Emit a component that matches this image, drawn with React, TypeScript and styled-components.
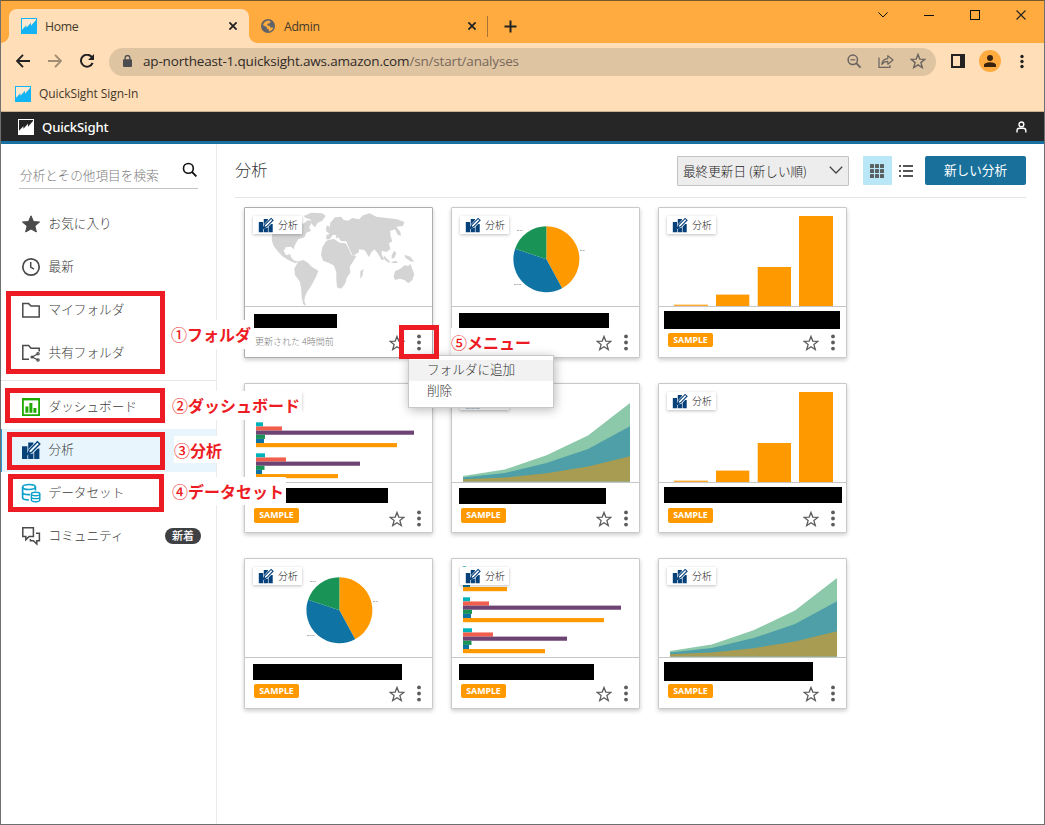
import React from "react";
import styled, { createGlobalStyle } from "styled-components";

const GlobalStyle = createGlobalStyle`
  * { box-sizing: border-box; }
  html, body { margin: 0; padding: 0; }
  body {
    width: 1045px;
    height: 825px;
    overflow: hidden;
    font-family: "Noto Sans", "Noto Sans CJK JP", sans-serif;
    color: #444;
  }
  svg { display: block; flex: none; }
`;

const JP = `"Noto Sans CJK JP", sans-serif`;
const UI = `"Open Sans", "Noto Sans", sans-serif`;

/* ---------- window ---------- */

const Window = styled.div`
  position: relative;
  display: flex;
  flex-direction: column;
  width: 1045px;
  height: 825px;
  border: 1px solid #707070;
  border-top-color: #76582f;
  background: #fff;
`;

const TabStrip = styled.div`
  display: flex;
  align-items: flex-start;
  height: 42px;
  padding-left: 8px;
  background: #ffab40;
`;

const Tab = styled.div<{ $active?: boolean; $width: number }>`
  position: relative;
  display: flex;
  align-items: center;
  width: ${(p) => p.$width}px;
  height: 34px;
  margin-top: 8px;
  padding: 0 12px 0 12px;
  border-radius: 8px 8px 0 0;
  background: ${(p) => (p.$active ? "#ffdeb8" : "transparent")};
  ${(p) =>
    p.$active &&
    `
    &::before, &::after {
      content: "";
      position: absolute;
      bottom: 0;
      width: 8px;
      height: 8px;
    }
    &::before { left: -8px; background: radial-gradient(circle at 0 0, transparent 7.5px, #ffdeb8 8px); }
    &::after { right: -8px; background: radial-gradient(circle at 100% 0, transparent 7.5px, #ffdeb8 8px); }
  `}
`;

const TabTitle = styled.span<{ $gap: number }>`
  flex: 1;
  margin-left: ${(p) => p.$gap}px;
  padding-top: 2px;
  font: 12.3px/18px ${UI};
  letter-spacing: -0.35px;
  color: #45392b;
`;

const TabDivider = styled.div`
  width: 1px;
  height: 21px;
  margin: 15px 16px 0 -1px;
  background: #a87434;
`;

const NewTab = styled.div`
  margin-top: 19px;
`;

const WindowControls = styled.div`
  display: flex;
  margin-left: auto;
`;

const ControlButton = styled.div`
  display: flex;
  align-items: center;
  justify-content: center;
  width: 46px;
  height: 28px;
`;

const Toolbar = styled.div`
  display: flex;
  align-items: center;
  height: 37px;
  padding: 0 15px 0 15px;
  background: #ffdeb8;
`;

const NavButtons = styled.div`
  display: flex;
  gap: 18px;
  width: 93px;
  margin-bottom: 1px;
`;

const Omnibox = styled.div`
  display: flex;
  align-items: center;
  width: 827px;
  height: 28px;
  padding: 0 10px 1px 14px;
  border-radius: 14px;
  background: #dfc4a2;
`;

const Url = styled.span`
  flex: 1;
  margin-left: 11px;
  font: 13.5px/20px ${UI};
  letter-spacing: -0.17px;
  color: #2f2a26;
  span { color: #75685a; }
`;

const OmniActions = styled.div`
  display: flex;
  align-items: center;
  gap: 16px;
`;

const ToolbarEnd = styled.div`
  display: flex;
  align-items: center;
  margin: 0 0 1px 15px;
`;

const Avatar = styled.div`
  display: flex;
  align-items: center;
  justify-content: center;
  width: 22px;
  height: 22px;
  margin: 0 19px 0 14px;
  border-radius: 50%;
  background: #ffab40;
`;

const BookmarkBar = styled.div`
  display: flex;
  align-items: center;
  height: 32px;
  padding: 0 14px 4px;
  border-bottom: 1px solid #cbb08f;
  background: #ffdeb8;
`;

const BookmarkText = styled.span`
  margin-left: 8px;
  font: 12px/18px ${UI};
  letter-spacing: -0.08px;
  color: #45392b;
`;

/* ---------- app ---------- */

const AppHeader = styled.header`
  display: flex;
  align-items: center;
  height: 32px;
  padding: 0 17px 0 17px;
  border-bottom: 3px solid #1871a0;
  background: #262626;
`;

const Brand = styled.span`
  flex: 1;
  margin-left: 8px;
  font: 500 13.2px/20px "Noto Sans", sans-serif;
  letter-spacing: -0.2px;
  color: #fff;
`;

const AppBody = styled.div`
  display: flex;
  flex: 1;
  min-height: 0;
`;

const Sidebar = styled.aside`
  width: 216px;
  border-right: 1px solid #ebebeb;
`;

const SearchField = styled.div`
  display: flex;
  align-items: flex-end;
  justify-content: space-between;
  width: 179px;
  height: 45px;
  margin: 0 0 13.6px 18px;
  padding: 0 0 3px 1px;
  border-bottom: 1px solid #c4c4c4;
  font: 300 12.65px/20px ${JP};
  color: #7c7c7c;
  svg { margin: 0 1px 8px 0; }
`;

const NavItem = styled.div<{ $active?: boolean }>`
  display: flex;
  align-items: center;
  height: 43px;
  padding: 0 15px 0 20px;
  background: ${(p) => (p.$active ? "#e8f5fc" : "transparent")};
  box-shadow: ${(p) => (p.$active ? "inset 1px 0 #2a9ad0" : "none")};
`;

const NavLabel = styled.span`
  flex: 1;
  margin-left: 7.5px;
  padding-bottom: 2.6px;
  font: 300 12.65px/20px ${JP};
  color: #3c3c3c;
`;

const NewBadge = styled.span`
  width: 36px;
  height: 16px;
  border-radius: 8px;
  background: #3f4043;
  font: 500 11px/15px ${JP};
  text-align: center;
  color: #fff;
`;

const NavDivider = styled.div`
  height: 1px;
  margin: 5px 0 5.4px;
  background: #e6e6e6;
`;

const Main = styled.main`
  flex: 1;
  padding: 12px 18px 0 18px;
`;

const PageHeader = styled.div`
  display: flex;
  align-items: flex-start;
  height: 42px;
  border-bottom: 1px solid #e4e4e4;
`;

const PageTitle = styled.h1`
  flex: 1;
  margin: 1px 0 0;
  font: 300 16.2px/24px ${JP};
  color: #333;
`;

const SortSelect = styled.div`
  display: flex;
  align-items: center;
  justify-content: space-between;
  width: 172px;
  height: 30px;
  margin-right: 14px;
  padding: 0 5px 0 5px;
  border: 1px solid #c2c2c2;
  border-radius: 1px;
  background: #ededed;
  font: 300 12.6px/26px ${JP};
  color: #222;
  svg { margin-bottom: 2px; }
`;

const ViewToggle = styled.div<{ $active?: boolean }>`
  display: flex;
  align-items: center;
  justify-content: center;
  width: 29px;
  height: 29px;
  padding-right: 1px;
  border-radius: 1px;
  background: ${(p) => (p.$active ? "#b9e7f7" : "transparent")};
`;

const PrimaryButton = styled.div`
  width: 101px;
  height: 29px;
  margin-left: 4px;
  border-radius: 2px;
  background: #19719b;
  font: 400 12.6px/28px ${JP};
  text-align: center;
  color: #fff;
`;

const CardGrid = styled.div`
  display: grid;
  grid-template-columns: repeat(3, 189px);
  grid-template-rows: 151px 150px 151px;
  gap: 25px 18px;
  padding: 9px 0 0 9px;
`;

const Card = styled.article<{ $strong?: boolean }>`
  position: relative;
  border: 1px solid ${(p) => (p.$strong ? "#adadad" : "#c9c9c9")};
  border-radius: 1px;
  background: #fff;
  box-shadow: 0 2px 4px rgba(0, 0, 0, 0.2);
`;

const Thumb = styled.div`
  height: 99px;
  border-bottom: 1px solid #c6c6c6;
`;

const TypeTag = styled.div`
  position: absolute;
  top: 8px;
  left: 8px;
  display: flex;
  align-items: center;
  gap: 4px;
  width: 49px;
  height: 18px;
  padding-left: 5px;
  background: #fff;
  box-shadow: 0 1px 3px rgba(0, 0, 0, 0.25);
  font: 300 9.9px/16px ${JP};
  color: #222;
`;

const Redacted = styled.div<{ $x: number; $y: number; $w: number; $h: number }>`
  width: ${(p) => p.$w}px;
  height: ${(p) => p.$h}px;
  margin: ${(p) => p.$y}px 0 ${(p) => 26 - p.$y - p.$h}px ${(p) => p.$x}px;
  background: #000;
`;

const CardFooter = styled.div`
  display: flex;
  align-items: flex-start;
  padding: 0 11px 0 9px;
`;

const SampleBadge = styled.span<{ $h: number }>`
  width: 45px;
  height: ${(p) => p.$h}px;
  margin-top: ${(p) => (p.$h > 14 ? -1 : 0)}px;
  border-radius: 2px;
  background: #ff9900;
  font: 700 8.8px/14px "Noto Sans", sans-serif;
  text-align: center;
  color: #fff;
`;

const Updated = styled.span`
  padding-left: 1px;
  font: 300 9px/17px ${JP};
  color: #7c7c7c;
`;

const CardActions = styled.div`
  display: flex;
  align-items: center;
  gap: 12px;
  margin: 1px 0 0 auto;
`;

/* ---------- overlays ---------- */

const ContextMenu = styled.div`
  position: absolute;
  left: 407px;
  top: 354px;
  width: 146px;
  height: 53px;
  padding-top: 4px;
  border: 1px solid #c8c8c8;
  background: #fff;
  box-shadow: 1px 2px 10px rgba(0, 0, 0, 0.28);
`;

const MenuItem = styled.div<{ $hover?: boolean }>`
  height: 21px;
  padding-left: 18px;
  background: ${(p) => (p.$hover ? "#f2f2f2" : "transparent")};
  font: 300 12.6px/18px ${JP};
  color: #333;
`;

const Outline = styled.div<{ $x: number; $y: number; $w: number; $h: number }>`
  position: absolute;
  left: ${(p) => p.$x - 1}px;
  top: ${(p) => p.$y - 1}px;
  width: ${(p) => p.$w}px;
  height: ${(p) => p.$h}px;
  border: 5px solid #ed1c24;
`;

const Note = styled.div<{ $x: number; $y: number; $w: number; $h: number }>`
  position: absolute;
  left: ${(p) => p.$x - 1}px;
  top: ${(p) => p.$y - 1}px;
  width: ${(p) => p.$w}px;
  height: ${(p) => p.$h}px;
  background: #fff;
  font: 700 16px/29px ${JP};
  white-space: nowrap;
  color: #ed1c24;
  span { font-weight: 500; }
`;

/* ---------- icons ---------- */

const QsLogo = ({ color, bg }: { color: string; bg: string }) => (
  <svg width="16" height="16" viewBox="0 0 16 16">
    <rect width="16" height="16" fill={color} />
    <path d="M1 1H15V2L10 7.8V4.8L5.4 9.8V7.2L1 11.8Z" fill={bg} />
  </svg>
);

const Cross = ({ size = 8, width = 1.8, color = "#222" }) => (
  <svg width={size} height={size} viewBox="0 0 8 8">
    <path d="M.4 .4L7.6 7.6M7.6 .4L.4 7.6" stroke={color} strokeWidth={width} />
  </svg>
);

const Globe = () => (
  <svg width="14" height="14" viewBox="0 0 14 14">
    <circle cx="7" cy="7" r="7" fill="#5f6368" />
    <path d="M7.5 1.6L9.6 2.4 8.8 4.2 6.6 4.8 6.2 6.4 8.6 6.8 9.4 8.6 12.3 8.4C11.8 10.6 10 12.2 7.8 12.4L8 10.8 6 9.8 5.6 8 2 6.2C2.6 3.6 4.6 1.8 7.5 1.6Z" fill="#ffab40" />
  </svg>
);

const Arrow = ({ color, flip }: { color: string; flip?: boolean }) => (
  <svg width="14" height="14" viewBox="0 0 14 14">
    <path
      d={flip ? "M0 7H12.6M7 .8L13 7L7 13.2" : "M14 7H1.4M7 .8L1 7L7 13.2"}
      fill="none"
      stroke={color}
      strokeWidth="1.9"
    />
  </svg>
);

const Reload = () => (
  <svg width="15" height="14" viewBox="0 0 15 14">
    <path d="M12 3.4A6 6 0 1 0 12.6 8.8" fill="none" stroke="#222" strokeWidth="2" />
    <path d="M14 0V6H8Z" fill="#222" />
  </svg>
);

const Lock = () => (
  <svg width="9" height="12" viewBox="0 0 9 12">
    <rect y="4.2" width="9" height="7.8" rx="1" fill="#4c4c50" />
    <path d="M2.1 5V2.9a2.4 2.4 0 0 1 4.8 0V5" fill="none" stroke="#4c4c50" strokeWidth="1.3" />
  </svg>
);

const ZoomOut = () => (
  <svg width="15" height="15" viewBox="0 0 15 15" fill="none" stroke="#6a6460">
    <circle cx="5.8" cy="5.8" r="4.7" strokeWidth="1.5" />
    <path d="M9.2 9.2L13.6 13.6" strokeWidth="1.8" />
    <path d="M3.4 5.8H8.2" strokeWidth="1.2" />
  </svg>
);

const Share = () => (
  <svg width="16" height="15" viewBox="0 0 16 15" fill="none" stroke="#6a6460" strokeWidth="1.2">
    <path d="M1 3.5V13.4H12V11" />
    <path d="M3.8 10.4C4.2 6.6 6.6 4.8 9.8 4.6V1.6L15 6L9.8 10.2V7.4C7.2 7.4 5.4 8.2 3.8 10.4Z" strokeLinejoin="round" />
  </svg>
);

const StarShape = ({ size, color, width = 1.3 }: { size: number; color: string; width?: number }) => (
  <svg width={size} height={size} viewBox="0 0 16 16">
    <path
      d="M8 1.4L9.8 6.1L14.8 6.4L10.9 9.6L12.3 14.6L8 11.8L3.7 14.6L5.1 9.6L1.2 6.4L6.2 6.1Z"
      fill="none"
      stroke={color}
      strokeWidth={width}
    />
  </svg>
);

const Dots = ({ color, r = 1.9, gap = 6.1 }: { color: string; r?: number; gap?: number }) => (
  <svg width="4" height="17" viewBox="0 0 4 17">
    {[-1, 0, 1].map((i) => (
      <circle key={i} cx="2" cy={8.5 + i * gap} r={r} fill={color} />
    ))}
  </svg>
);

const SidePanel = () => (
  <svg width="14" height="14" viewBox="0 0 14 14">
    <path d="M0 0H14V14H0ZM2 2V12H9V2Z" fill="#222" fillRule="evenodd" />
  </svg>
);

const Person = () => (
  <svg width="14" height="12" viewBox="0 0 14 12" fill="#3a230c">
    <circle cx="7" cy="3" r="3" />
    <path d="M1 12V10C1 8 5 7.2 7 7.2S13 8 13 10V12Z" />
  </svg>
);

const UserOutline = () => (
  <svg width="12" height="12" viewBox="0 0 12 12" fill="none" stroke="#fff" strokeWidth="1.4">
    <circle cx="6.4" cy="3.4" r="2.4" />
    <path d="M2 11.6V9.6C2 8 3.2 7.2 4.4 7.2H8.4C9.6 7.2 10.8 8 10.8 9.6V11.6" />
  </svg>
);

const SearchIcon = () => (
  <svg width="15" height="15" viewBox="0 0 15 15" fill="none" stroke="#111">
    <circle cx="6.4" cy="6.4" r="4.9" strokeWidth="1.6" />
    <path d="M9.9 9.9L14.4 14.4" strokeWidth="1.9" />
  </svg>
);

const NavSvg = ({ children }: { children: React.ReactNode }) => (
  <svg width="20" height="20" viewBox="0 0 20 20" fill="none" stroke="#4a4a4a" strokeWidth="1.5">
    {children}
  </svg>
);

const StarIcon = () => (
  <NavSvg>
    <path d="M10 1.8L12.5 7.6L18.6 8L13.9 12L15.4 18L10 15L4.6 18L6.1 12L1.4 8L7.5 7.6Z" fill="#4a4a4a" strokeWidth="1" />
  </NavSvg>
);

const ClockIcon = () => (
  <NavSvg>
    <circle cx="10" cy="10" r="8.2" strokeWidth="1.7" />
    <path d="M9.7 5V10.2L13 12.2" />
  </NavSvg>
);

const FolderIcon = () => (
  <NavSvg>
    <path d="M1.8 3.6H7.6L10 6H18.2V17H1.8Z" />
  </NavSvg>
);

const SharedFolderIcon = () => (
  <NavSvg>
    <path d="M8 16.2H1.8V2.6H7.6L10 5.2H18.2V8.4" />
    <path d="M17 10.8L11.2 14L17 17" strokeWidth="1.2" />
    <circle cx="17" cy="10.8" r="1.2" strokeWidth="1.2" />
    <circle cx="11" cy="14" r="1" strokeWidth="1.2" />
    <circle cx="17" cy="17" r="1.2" strokeWidth="1.2" />
  </NavSvg>
);

const DashboardIcon = () => (
  <NavSvg>
    <path d="M1.9 1.9H18.1V18.1H1.9Z" stroke="#1fa900" strokeWidth="1.8" />
    <path d="M1 1H19V3.4H1Z" fill="#1fa900" stroke="none" />
    <path d="M4.4 9.4H7.4V15.8H4.4ZM8.4 6H11.4V15.8H8.4ZM12.4 11H15.4V15.8H12.4Z" fill="#1fa900" stroke="none" />
  </NavSvg>
);

const AnalysisIcon = ({ size = 20, bg = "#fff" }: { size?: number; bg?: string }) => (
  <svg width={size} height={size} viewBox="0 0 20 20">
    <path d="M1 6.2H6.4V19H1ZM7.2 2.4H12.4V19H7.2ZM13.2 8.6H18.4V19H13.2Z" fill="#07417a" />
    <path d="M8 12.6L8.8 9.8L16.2 2.2L18.8 4.4L11 12Z" fill={bg} stroke={bg} strokeWidth="3" />
    <path d="M6.4 14.4L8.4 9.8L16.4 1.8L18.8 4L11 12Z" fill={bg} stroke="#07417a" strokeWidth="1.4" />
    <path d="M6.2 14.6L7.6 11L9.8 13.2Z" fill="#07417a" />
  </svg>
);

const DatasetIcon = () => (
  <NavSvg>
    <g stroke="#0ba0cb" strokeWidth="1.7">
      <ellipse cx="8" cy="4" rx="6.4" ry="2.5" />
      <path d="M1.6 4V14.8C1.6 16.2 4.4 17 8 17M14.4 4V7.6M1.6 9.4C1.6 11 4.4 12 9 11.6" />
      <ellipse cx="14.6" cy="11" rx="4.2" ry="1.7" fill="#fff" strokeWidth="1.4" />
      <path d="M10.4 11V17C10.4 19.3 18.8 19.3 18.8 17V11M10.4 14C10.4 16.2 18.8 16.2 18.8 14" strokeWidth="1.4" />
    </g>
  </NavSvg>
);

const CommunityIcon = () => (
  <NavSvg>
    <path d="M1.8 1.8H12.4V10.6H8L4.8 13.8V10.6H1.8Z" />
    <path d="M15 7.2H18.4V14.8H15.8V18L12.4 14.8H9.4V13" />
  </NavSvg>
);

/* ---------- charts ---------- */

const MapChart = () => (
  <svg width="187" height="98" viewBox="30 24 561 294" fill="#d4d4d4">
    <path d="M112 98L128 70L170 58L196 60L204 72L220 60L232 66L222 82L228 92L214 98L208 112L190 118L180 134L176 148L168 140L152 142L146 154L154 166L166 162L168 172L178 182L190 184L182 190L164 182L144 170L130 156L116 138L110 120Z" />
    <path d="M206 48L228 38L262 40L272 48L262 62L248 68L240 82L232 74L226 58L212 54Z" />
    <path d="M190 184L206 180L220 190L230 200L250 212L244 228L236 244L226 262L216 276L210 290L208 304L214 318L204 312L200 290L198 262L194 244L180 226L178 206Z" />
    <path d="M272 92L284 82L286 68L300 52L318 50L326 60L340 62L352 54L372 58L384 46L404 40L424 50L456 54L486 58L508 66L504 78L484 80L496 96L498 108L488 104L480 88L466 92L466 106L472 124L462 130L466 148L454 156L440 152L440 164L448 178L440 180L428 160L418 148L408 158L402 172L394 158L388 150L372 148L372 156L354 168L346 152L338 134L334 124L318 124L310 112L302 116L304 106L294 104L284 118L274 118L274 106L284 102Z" />
    <path d="M284 80L278 92L272 88L276 76Z" />
    <path d="M274 122L296 116L314 128L332 130L340 144L350 166L364 168L352 188L344 200L346 218L336 232L330 252L318 266L306 262L304 240L304 216L296 196L280 188L264 182L258 164L262 142Z" />
    <path d="M376 214L386 206L382 228L376 236Z" />
    <path d="M476 230L480 214L496 206L508 196L520 198L526 192L532 208L538 222L532 240L520 250L508 240L494 236L480 240Z" />
    <path d="M446 166L456 176L466 186L460 188L448 178ZM470 164L478 152L484 160L478 174L470 176ZM508 164L526 170L538 186L526 184L512 174ZM468 186L484 182L488 188L474 190Z" />
  </svg>
);

const PieChart = () => {
  const cx = 94.4;
  const cy = 51.2;
  const r = 33;
  const at = (deg: number) => {
    const a = (deg * Math.PI) / 180;
    return `${cx + r * Math.sin(a)} ${cy - r * Math.cos(a)}`;
  };
  const slice = (from: number, to: number) => `M${cx} ${cy}L${at(from)}A${r} ${r} 0 0 1 ${at(to)}Z`;
  return (
    <svg width="187" height="98" viewBox="0 0 187 98">
      <path d={slice(0, 151.5)} fill="#ff9900" />
      <path d={slice(151.5, 288.5)} fill="#0f73a3" />
      <path d={slice(288.5, 360)} fill="#1a9357" />
      <path d="M65 22.5H71M128 42.5H133M62 76.5H70" stroke="#b4b4b4" strokeWidth="1" strokeDasharray="2 .6" />
    </svg>
  );
};

const ColumnChart = () => (
  <svg width="187" height="98" viewBox="0 0 187 98" fill="#ff9900">
    <rect x="15" y="96.6" width="34" height="1.4" opacity=".8" />
    <rect x="57" y="86.6" width="33.3" height="11.4" />
    <rect x="98.7" y="59" width="33.3" height="39" />
    <rect x="140" y="8" width="34" height="90" />
  </svg>
);

const barColors = ["#00b3ba", "#f35d4b", "#6d4373", "#1a9357", "#0f73a3", "#ff9900"];
const barGroups = [
  { y: 7, widths: [3, 4, 12, 4, 7, 44] },
  { y: 38, widths: [7, 26, 158, 9, 8, 141] },
  { y: 69, widths: [9, 30, 104, 8.5, 6, 82] },
];

const BarChart = () => (
  <svg width="187" height="98" viewBox="0 0 187 98">
    {barGroups.map((g) =>
      g.widths.map((w, i) => (
        <rect key={`${g.y}-${i}`} x="11" y={g.y + 0.3 + i * 4.15} width={w} height="4.15" fill={barColors[i]} />
      ))
    )}
  </svg>
);

const AreaChart = () => (
  <svg width="187" height="98" viewBox="0 0 187 98">
    <path d="M11 97.5V92L52.7 85.5L94.5 71.3L136 51.5L178 19V97.5Z" fill="#8cc8aa" />
    <path d="M11 97.5V93.5L52.7 89L94.5 79L136 65L178 42.3V97.5Z" fill="#4e9fa8" />
    <path d="M11 97.5V95.2L52.7 93.5L94.5 89.2L136 82.5L178 72.3V97.5Z" fill="#a79c52" />
  </svg>
);

/* ---------- data ---------- */

type CardData = {
  chart: React.ComponentType;
  bar: [number, number, number, number];
  updated?: string;
  badge?: number;
  bare?: boolean;
};

const cards: CardData[] = [
  { chart: MapChart, bar: [9, 7, 83, 14], updated: "更新された 4時間前" },
  { chart: PieChart, bar: [7, 6, 150, 15] },
  { chart: ColumnChart, bar: [5, 4, 176, 18], badge: 14 },
  { chart: BarChart, bar: [41, 5, 102, 15], badge: 15, bare: true },
  { chart: AreaChart, bar: [7, 5, 147, 16], badge: 15 },
  { chart: ColumnChart, bar: [5, 4, 178, 16], badge: 15 },
  { chart: PieChart, bar: [8, 6, 149, 16], badge: 14 },
  { chart: BarChart, bar: [7, 6, 135, 16], badge: 14 },
  { chart: AreaChart, bar: [5, 4, 149, 19], badge: 14 },
];

const AnalysisCard = ({ data }: { data: CardData }) => {
  const Chart = data.chart;
  const [x, y, w, h] = data.bar;
  return (
    <Card $strong={!!data.updated}>
      <Thumb>
        <Chart />
      </Thumb>
      <TypeTag>
        {!data.bare && (
          <>
            <AnalysisIcon size={16} />
            分析
          </>
        )}
      </TypeTag>
      <Redacted $x={x} $y={y} $w={w} $h={h} />
      <CardFooter>
        {data.updated && <Updated>{data.updated}</Updated>}
        {data.badge && <SampleBadge $h={data.badge}>SAMPLE</SampleBadge>}
        <CardActions>
          <StarShape size={16} color="#5c5c5c" />
          <Dots color="#5c5c5c" />
        </CardActions>
      </CardFooter>
    </Card>
  );
};

export default function App() {
  return (
    <>
      <GlobalStyle />
      <Window>
        <TabStrip>
          <Tab $active $width={240}>
            <QsLogo color="#14b4f4" bg="#ffe9d0" />
            <TabTitle $gap={8}>Home</TabTitle>
            <Cross />
          </Tab>
          <Tab $width={239}>
            <Globe />
            <TabTitle $gap={9}>Admin</TabTitle>
            <Cross />
          </Tab>
          <TabDivider />
          <NewTab>
            <svg width="13" height="13" viewBox="0 0 13 13" stroke="#222" strokeWidth="2">
              <path d="M6.5 .5V12.5M.5 6.5H12.5" />
            </svg>
          </NewTab>
          <WindowControls>
            <ControlButton>
              <svg width="10" height="6" viewBox="0 0 10 6" fill="none" stroke="#111">
                <path d="M.4 .4L5 5L9.6 .4" />
              </svg>
            </ControlButton>
            <ControlButton>
              <svg width="10" height="2" viewBox="0 0 10 2">
                <rect y="1" width="10" height="1" fill="#111" />
              </svg>
            </ControlButton>
            <ControlButton>
              <svg width="10" height="10" viewBox="0 0 10 10" fill="none" stroke="#111">
                <rect x=".5" y=".5" width="9" height="9" />
              </svg>
            </ControlButton>
            <ControlButton>
              <Cross size={10} width={0.9} />
            </ControlButton>
          </WindowControls>
        </TabStrip>
        <Toolbar>
          <NavButtons>
            <Arrow color="#222" />
            <Arrow color="#a18c74" flip />
            <Reload />
          </NavButtons>
          <Omnibox>
            <Lock />
            <Url>
              ap-northeast-1.quicksight.aws.amazon.com<span>/sn/start/analyses</span>
            </Url>
            <OmniActions>
              <ZoomOut />
              <Share />
              <StarShape size={16} color="#6a6460" width={1.4} />
            </OmniActions>
          </Omnibox>
          <ToolbarEnd>
            <SidePanel />
            <Avatar>
              <Person />
            </Avatar>
            <Dots color="#222" r={1.7} gap={5} />
          </ToolbarEnd>
        </Toolbar>
        <BookmarkBar>
          <QsLogo color="#14b4f4" bg="#ffe9d0" />
          <BookmarkText>QuickSight Sign-In</BookmarkText>
        </BookmarkBar>
        <AppHeader>
          <QsLogo color="#fff" bg="#262626" />
          <Brand>QuickSight</Brand>
          <UserOutline />
        </AppHeader>
        <AppBody>
          <Sidebar>
            <SearchField>
              分析とその他項目を検索
              <SearchIcon />
            </SearchField>
            <NavItem>
              <StarIcon />
              <NavLabel>お気に入り</NavLabel>
            </NavItem>
            <NavItem>
              <ClockIcon />
              <NavLabel>最新</NavLabel>
            </NavItem>
            <NavItem>
              <FolderIcon />
              <NavLabel>マイフォルダ</NavLabel>
            </NavItem>
            <NavItem>
              <SharedFolderIcon />
              <NavLabel>共有フォルダ</NavLabel>
            </NavItem>
            <NavDivider />
            <NavItem>
              <DashboardIcon />
              <NavLabel>ダッシュボード</NavLabel>
            </NavItem>
            <NavItem $active>
              <AnalysisIcon bg="#e8f5fc" />
              <NavLabel>分析</NavLabel>
            </NavItem>
            <NavItem>
              <DatasetIcon />
              <NavLabel>データセット</NavLabel>
            </NavItem>
            <NavItem>
              <CommunityIcon />
              <NavLabel>コミュニティ</NavLabel>
              <NewBadge>新着</NewBadge>
            </NavItem>
          </Sidebar>
          <Main>
            <PageHeader>
              <PageTitle>分析</PageTitle>
              <SortSelect>
                最終更新日 (新しい順)
                <svg width="14" height="8" viewBox="0 0 14 8" fill="none" stroke="#444" strokeWidth="1.3">
                  <path d="M.8 .8L7 7L13.2 .8" />
                </svg>
              </SortSelect>
              <ViewToggle $active>
                <svg width="14" height="14" viewBox="0 0 14 14" fill="#5a6163">
                  {[0, 5, 10].map((y) => [0, 5, 10].map((x) => <rect key={`${x}-${y}`} x={x} y={y} width="4" height="4" rx=".6" />))}
                </svg>
              </ViewToggle>
              <ViewToggle>
                <svg width="14" height="12" viewBox="0 0 14 12" fill="#555">
                  {[0, 5, 10].map((y) => (
                    <g key={y}>
                      <rect y={y} width="2" height="2" />
                      <rect x="4" y={y} width="10" height="2" />
                    </g>
                  ))}
                </svg>
              </ViewToggle>
              <PrimaryButton>新しい分析</PrimaryButton>
            </PageHeader>
            <CardGrid>
              {cards.map((c, i) => (
                <AnalysisCard key={i} data={c} />
              ))}
            </CardGrid>
          </Main>
        </AppBody>

        <Note $x={171} $y={320} $w={74} $h={29}>
          <span>①</span>フォルダ
        </Note>
        <Note $x={172} $y={391} $w={130} $h={29}>
          <span>②</span>ダッシュボード
        </Note>
        <Note $x={174} $y={436} $w={50} $h={27}>
          <span>③</span>分析
        </Note>
        <Note $x={172} $y={477} $w={114} $h={28}>
          <span>④</span>データセット
        </Note>
        <Note $x={451} $y={328} $w={86} $h={27}>
          <span>⑤</span>メニュー
        </Note>
        <ContextMenu>
          <MenuItem $hover>フォルダに追加</MenuItem>
          <MenuItem>削除</MenuItem>
        </ContextMenu>
        <Outline $x={6} $y={291} $w={159} $h={83} />
        <Outline $x={5} $y={388} $w={160} $h={35} />
        <Outline $x={7} $y={432} $w={158} $h={38} />
        <Outline $x={8} $y={474} $w={156} $h={38} />
        <Outline $x={399} $y={325} $w={40} $h={34} />
      </Window>
    </>
  );
}
